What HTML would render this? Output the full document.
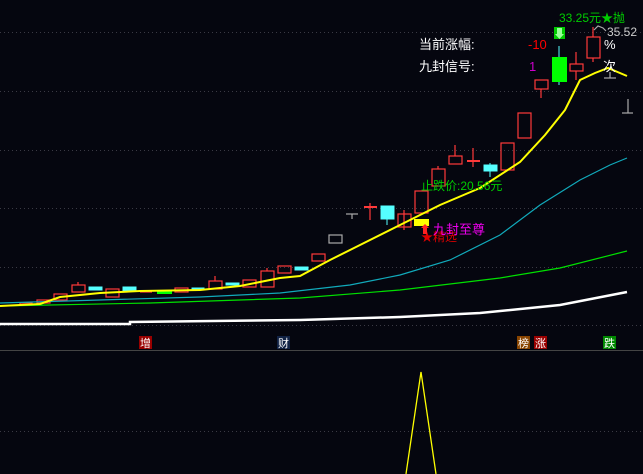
<!DOCTYPE html><html><head><meta charset="utf-8"><style>
body{margin:0;background:#05060f;width:643px;height:474px;overflow:hidden;font-family:"Liberation Sans","Noto Sans CJK SC",sans-serif}
svg{display:block}
</style></head><body>
<svg width="643" height="474" viewBox="0 0 643 474" xmlns="http://www.w3.org/2000/svg" font-family="Liberation Sans, Noto Sans CJK SC, sans-serif">
<g stroke="#3a3a44" stroke-dasharray="1,3" stroke-width="1">
<line x1="0" y1="32.5" x2="643" y2="32.5"/><line x1="0" y1="91.5" x2="643" y2="91.5"/><line x1="0" y1="150.5" x2="643" y2="150.5"/><line x1="0" y1="208.5" x2="643" y2="208.5"/><line x1="0" y1="267.5" x2="643" y2="267.5"/><line x1="0" y1="325.5" x2="643" y2="325.5"/><line x1="0" y1="431.5" x2="643" y2="431.5"/>
</g>
<line x1="0" y1="350.5" x2="643" y2="350.5" stroke="#444" stroke-width="1"/>
<g fill="none" stroke="#ff3a3a" stroke-width="1.2">
<rect x="20" y="303" width="12" height="2"/><rect x="37" y="300" width="13" height="3"/><rect x="54" y="294" width="13" height="6"/><rect x="72" y="285" width="13" height="7"/><line x1="78" y1="282" x2="78" y2="285"/>
<rect x="106" y="289" width="13" height="8"/><line x1="140" y1="292" x2="152" y2="292"/><rect x="175" y="288" width="13" height="4"/>
<rect x="209" y="281" width="13" height="8"/><line x1="215" y1="276" x2="215" y2="281"/><rect x="243" y="280" width="13" height="7"/><rect x="261" y="271" width="13" height="16"/><line x1="267" y1="268" x2="267" y2="271"/><rect x="278" y="266" width="13" height="7"/><rect x="312" y="254" width="13" height="7"/>
<line x1="364" y1="207" x2="377" y2="207" stroke-width="2"/><line x1="370" y1="203" x2="370" y2="220"/>
<rect x="398" y="214" width="13" height="13"/><line x1="404" y1="210" x2="404" y2="230"/>
<rect x="415" y="191" width="13" height="22"/><rect x="432" y="169" width="13" height="17"/><line x1="438" y1="166" x2="438" y2="169"/>
<rect x="449" y="156" width="13" height="8"/><line x1="455" y1="145" x2="455" y2="156"/>
<line x1="467" y1="161" x2="480" y2="161" stroke-width="2"/><line x1="473" y1="148" x2="473" y2="167"/>
<rect x="501" y="143" width="13" height="27"/><rect x="518" y="113" width="13" height="25"/>
<rect x="535" y="80" width="13" height="9"/><line x1="541" y1="89" x2="541" y2="98"/>
<rect x="570" y="64" width="13" height="7"/><line x1="576" y1="52" x2="576" y2="64"/><line x1="576" y1="71" x2="576" y2="80"/>
<rect x="587" y="37" width="13" height="21"/><line x1="593" y1="27" x2="593" y2="37"/><line x1="593" y1="58" x2="593" y2="62"/>
</g>
<g fill="none" stroke="#aaa" stroke-width="1.2"><rect x="329" y="235" width="13" height="8"/><line x1="346" y1="214" x2="358" y2="214"/><line x1="352" y1="214" x2="352" y2="219"/>
<line x1="622" y1="113" x2="633" y2="113"/><line x1="628" y1="99" x2="628" y2="113"/><line x1="604" y1="78" x2="616" y2="78"/><line x1="610" y1="72" x2="610" y2="78"/>
<path d="M594 30 L598 26 L603 28 L606 31"/></g>
<g fill="#5ff" stroke="#5ff"><rect x="89" y="287" width="13" height="3"/><rect x="123" y="287" width="13" height="4"/><rect x="192" y="288" width="12" height="2"/><rect x="226" y="283" width="13" height="2"/><rect x="295" y="267" width="13" height="3"/><rect x="381" y="206" width="13" height="13"/><line x1="387" y1="219" x2="387" y2="225"/><rect x="484" y="165" width="13" height="6"/><line x1="490" y1="163" x2="490" y2="177"/><line x1="559" y1="46" x2="559" y2="85"/></g>
<rect x="157" y="291" width="15" height="3" fill="#0f0"/>
<rect x="552" y="57" width="15" height="25" fill="#0f0"/>
<rect x="554" y="27" width="11" height="12" fill="#0c0"/><path d="M557 28v6h-2l4.5 5 4.5-5h-2v-6z" fill="#9f9"/>
<rect x="414" y="219" width="15" height="7" fill="#ff0"/>
<polyline fill="none" stroke="#ffffff" stroke-width="2.5" points="0,324 130,324 130,322 300,320 400,317 480,313 560,305 627,292"/>
<polyline fill="none" stroke="#00e000" stroke-width="1.2" points="0,306 150,303 300,298 400,290 500,278 560,268 627,251"/>
<polyline fill="none" stroke="#1ab" stroke-width="1.2" points="0,303 100,300 200,297 280,293 350,285 400,275 450,260 500,235 540,205 580,180 610,165 627,158"/>
<polyline fill="none" stroke="#ff0" stroke-width="2" points="0,306 40,304 60,297 100,293 140,291 200,290 240,286 280,278 300,276 330,260 360,245 400,225 440,205 480,188 520,162 545,135 565,110 580,80 595,73 608,68 627,76"/>
<polyline fill="none" stroke="#ff0" stroke-width="1.3" points="406,474 421,372 436,474"/>
<g font-size="13"><text x="419" y="49" fill="#fff">当前涨幅:</text><text x="528" y="49" fill="#f00">-10</text><text x="604" y="49" fill="#fff">%</text>
<text x="419" y="71" fill="#fff">九封信号:</text><text x="529" y="71" fill="#c0c">1</text><text x="603" y="71" fill="#fff">次</text></g>
<g font-size="12"><text x="559" y="22" fill="#0c0">33.25元★抛</text><text x="607" y="36" fill="#ccc">35.52</text>
<text x="421" y="190" fill="#0c0">止跌价:20.56元</text>
<text x="421" y="241" fill="#d00">★精选</text><text x="433" y="234" fill="#e0e" font-size="13">九封至尊</text></g>
<path d="M421 228l4-4 4 4h-2v6h-4v-6z" fill="#f22"/>
<g font-size="11" fill="#fff"><rect x="139" y="336" width="13" height="13" fill="#900"/><text x="140" y="347">增</text>
<rect x="277" y="336" width="13" height="13" fill="#124"/><text x="278" y="347">财</text>
<rect x="517" y="336" width="13" height="13" fill="#840"/><text x="518" y="347">榜</text>
<rect x="534" y="336" width="13" height="13" fill="#900"/><text x="535" y="347">涨</text>
<rect x="603" y="336" width="13" height="13" fill="#080"/><text x="604" y="347">跌</text></g>
</svg></body></html>
